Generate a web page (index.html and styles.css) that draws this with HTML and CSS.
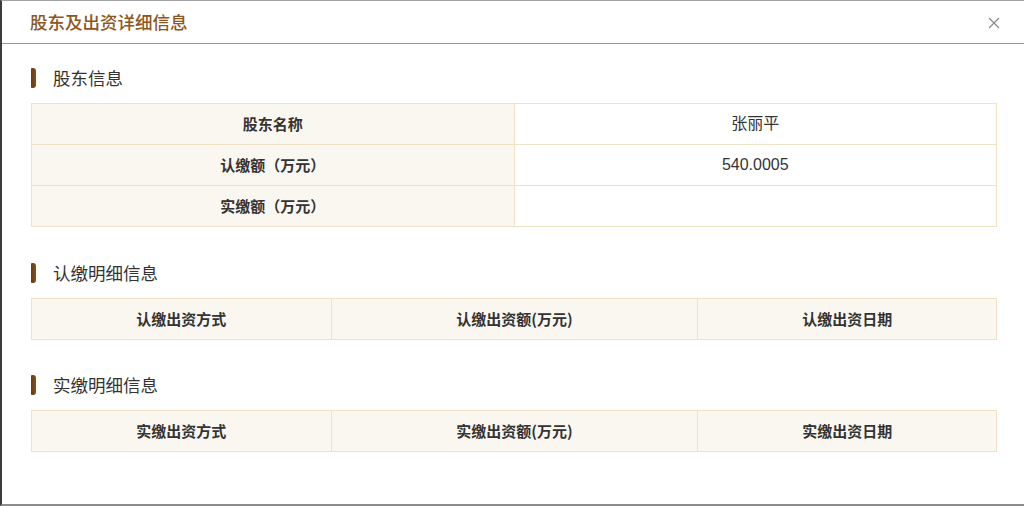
FILE: index.html
```html
<!DOCTYPE html>
<html lang="zh-CN">
<head>
<meta charset="utf-8">
<title>股东及出资详细信息</title>
<link rel="stylesheet" href="styles.css">
</head>
<body>
<div class="modal">
  <div class="modal-header">
    <h1 class="modal-title">股东及出资详细信息</h1>
    <button class="modal-close" type="button" aria-label="关闭">
      <svg width="12" height="12" viewBox="0 0 12 12"><path d="M1 1L11 11M11 1L1 11" stroke="#8a8a8a" stroke-width="1.2" fill="none"/></svg>
    </button>
  </div>
  <div class="modal-body">
    <section class="section">
      <h2 class="section-title"><span class="bar"></span>股东信息</h2>
      <table class="info-table kv">
        <tr><th>股东名称</th><td>张丽平</td></tr>
        <tr><th>认缴额（万元）</th><td>540.0005</td></tr>
        <tr><th>实缴额（万元）</th><td></td></tr>
      </table>
    </section>
    <section class="section">
      <h2 class="section-title"><span class="bar"></span>认缴明细信息</h2>
      <table class="info-table cols">
        <tr><th class="c1">认缴出资方式</th><th class="c2">认缴出资额(万元)</th><th class="c3">认缴出资日期</th></tr>
      </table>
    </section>
    <section class="section section-last">
      <h2 class="section-title"><span class="bar"></span>实缴明细信息</h2>
      <table class="info-table cols">
        <tr><th class="c1">实缴出资方式</th><th class="c2">实缴出资额(万元)</th><th class="c3">实缴出资日期</th></tr>
      </table>
    </section>
  </div>
</div>
</body>
</html>
```

FILE: styles.css
```css
html, body {
  margin: 0;
  padding: 0;
  background: #ffffff;
}

body {
  font-family: "Noto Sans CJK SC", "Noto Sans", "Liberation Sans", sans-serif;
  color: #333333;
}

.modal {
  box-sizing: border-box;
  width: 1024px;
  height: 506px;
  border-top: 1px solid #a3a3a3;
  border-left: 2px solid #3c3c3c;
  border-bottom: 2px solid #8c8c8c;
  background: #ffffff;
  display: flex;
  flex-direction: column;
}

.modal-header {
  height: 42px;
  border-bottom: 1px solid #9a9a9a;
  display: flex;
  align-items: center;
  justify-content: space-between;
  padding: 0 24px 0 28px;
}

.modal-title {
  margin: 0;
  font-size: 17.5px;
  font-weight: 500;
  color: #8d5621;
  line-height: 24px;
}

.modal-close {
  border: 0;
  background: none;
  padding: 0;
  width: 12px;
  height: 12px;
  display: flex;
  cursor: pointer;
  margin-top: 1px;
}

.modal-body {
  padding: 22px 27px 0 29px;
  display: flex;
  flex-direction: column;
  gap: 34px;
}

.section-last {
  margin-top: -1px;
}

.section-title {
  margin: 0 0 13px 0;
  height: 24px;
  display: flex;
  align-items: center;
  font-size: 17.5px;
  font-weight: 400;
  color: #333333;
  line-height: 24px;
}

.bar {
  width: 5px;
  height: 20px;
  border-radius: 1px 3px 3px 1px;
  background: linear-gradient(90deg, #6b3a12, #8a4f1c);
  margin-right: 17px;
}

.info-table {
  width: 100%;
  border-collapse: collapse;
  table-layout: fixed;
}

.info-table th,
.info-table td {
  border: 1px solid #f0e2c6;
  height: 40px;
  padding: 0;
  text-align: center;
  line-height: 20px;
}

.info-table th {
  background: #faf7f1;
  font-size: 15px;
  font-weight: 700;
  color: #333333;
}

.info-table td {
  background: #ffffff;
  font-family: "Liberation Sans", "Noto Sans CJK SC", sans-serif;
  font-size: 16px;
  color: #333333;
}

.kv th {
  width: 49.9%;
}

.cols .c1 { width: 30.95%; }
.cols .c3 { width: 30.85%; }
```
